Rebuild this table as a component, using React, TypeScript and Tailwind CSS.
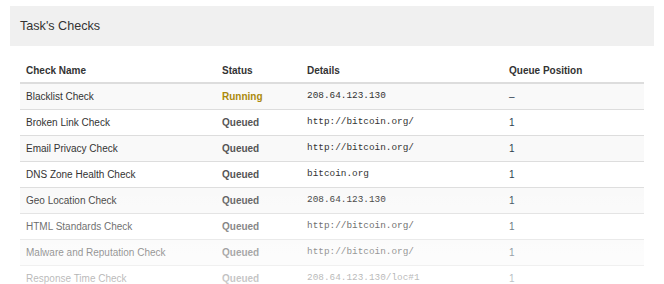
const ROWS = [
  { name: 'Blacklist Check', status: 'Running', details: '208.64.123.130', queue: '–' },
  { name: 'Broken Link Check', status: 'Queued', details: 'http://bitcoin.org/', queue: '1' },
  { name: 'Email Privacy Check', status: 'Queued', details: 'http://bitcoin.org/', queue: '1' },
  { name: 'DNS Zone Health Check', status: 'Queued', details: 'bitcoin.org', queue: '1' },
  { name: 'Geo Location Check', status: 'Queued', details: '208.64.123.130', queue: '1' },
  { name: 'HTML Standards Check', status: 'Queued', details: 'http://bitcoin.org/', queue: '1' },
  { name: 'Malware and Reputation Check', status: 'Queued', details: 'http://bitcoin.org/', queue: '1' },
  { name: 'Response Time Check', status: 'Queued', details: '208.64.123.130/loc#1', queue: '1' },
];

export default function App() {
  return (
    <div className="relative h-[284px] w-[664px] overflow-hidden bg-white pt-[6px] font-['Liberation_Sans',Arial,sans-serif] text-[#333]">
      {/* Panel heading */}
      <div className="mx-[10px] flex h-[40px] items-center bg-[#f0f0f0] px-[10px]">
        <h2 className="text-[12.6px] text-[#333]">Task's Checks</h2>
      </div>

      {/* Table */}
      <div className="mx-[20px] mt-[13px]">
        <div className="grid h-[25px] grid-cols-[196px_85px_202px_1fr] items-center border-b-2 border-[#dddddd] px-[6px] text-[10px] font-bold text-[#333]">
          <span>Check Name</span>
          <span>Status</span>
          <span>Details</span>
          <span>Queue Position</span>
        </div>
        {ROWS.map((row, i) => (
          <div
            key={i}
            className={`grid h-[26px] grid-cols-[196px_85px_202px_1fr] items-center border-b border-[#dddddd] px-[6px] text-[10px] ${
              i % 2 === 0 ? 'bg-[#f9f9f9]' : 'bg-white'
            }`}
          >
            <span className="text-[#333]">{row.name}</span>
            <span className={`font-bold ${row.status === 'Running' ? 'text-[#ab890c]' : 'text-[#555]'}`}>{row.status}</span>
            <span className="font-['Liberation_Mono','Courier_New',monospace] text-[9.4px] text-[#333]">{row.details}</span>
            <span className="text-[#2d3e50]">{row.queue}</span>
          </div>
        ))}
      </div>

      {/* Bottom fade */}
      <div className="pointer-events-none absolute inset-x-0 bottom-0 h-[100px] bg-gradient-to-b from-white/0 to-white/70" />
    </div>
  );
}
